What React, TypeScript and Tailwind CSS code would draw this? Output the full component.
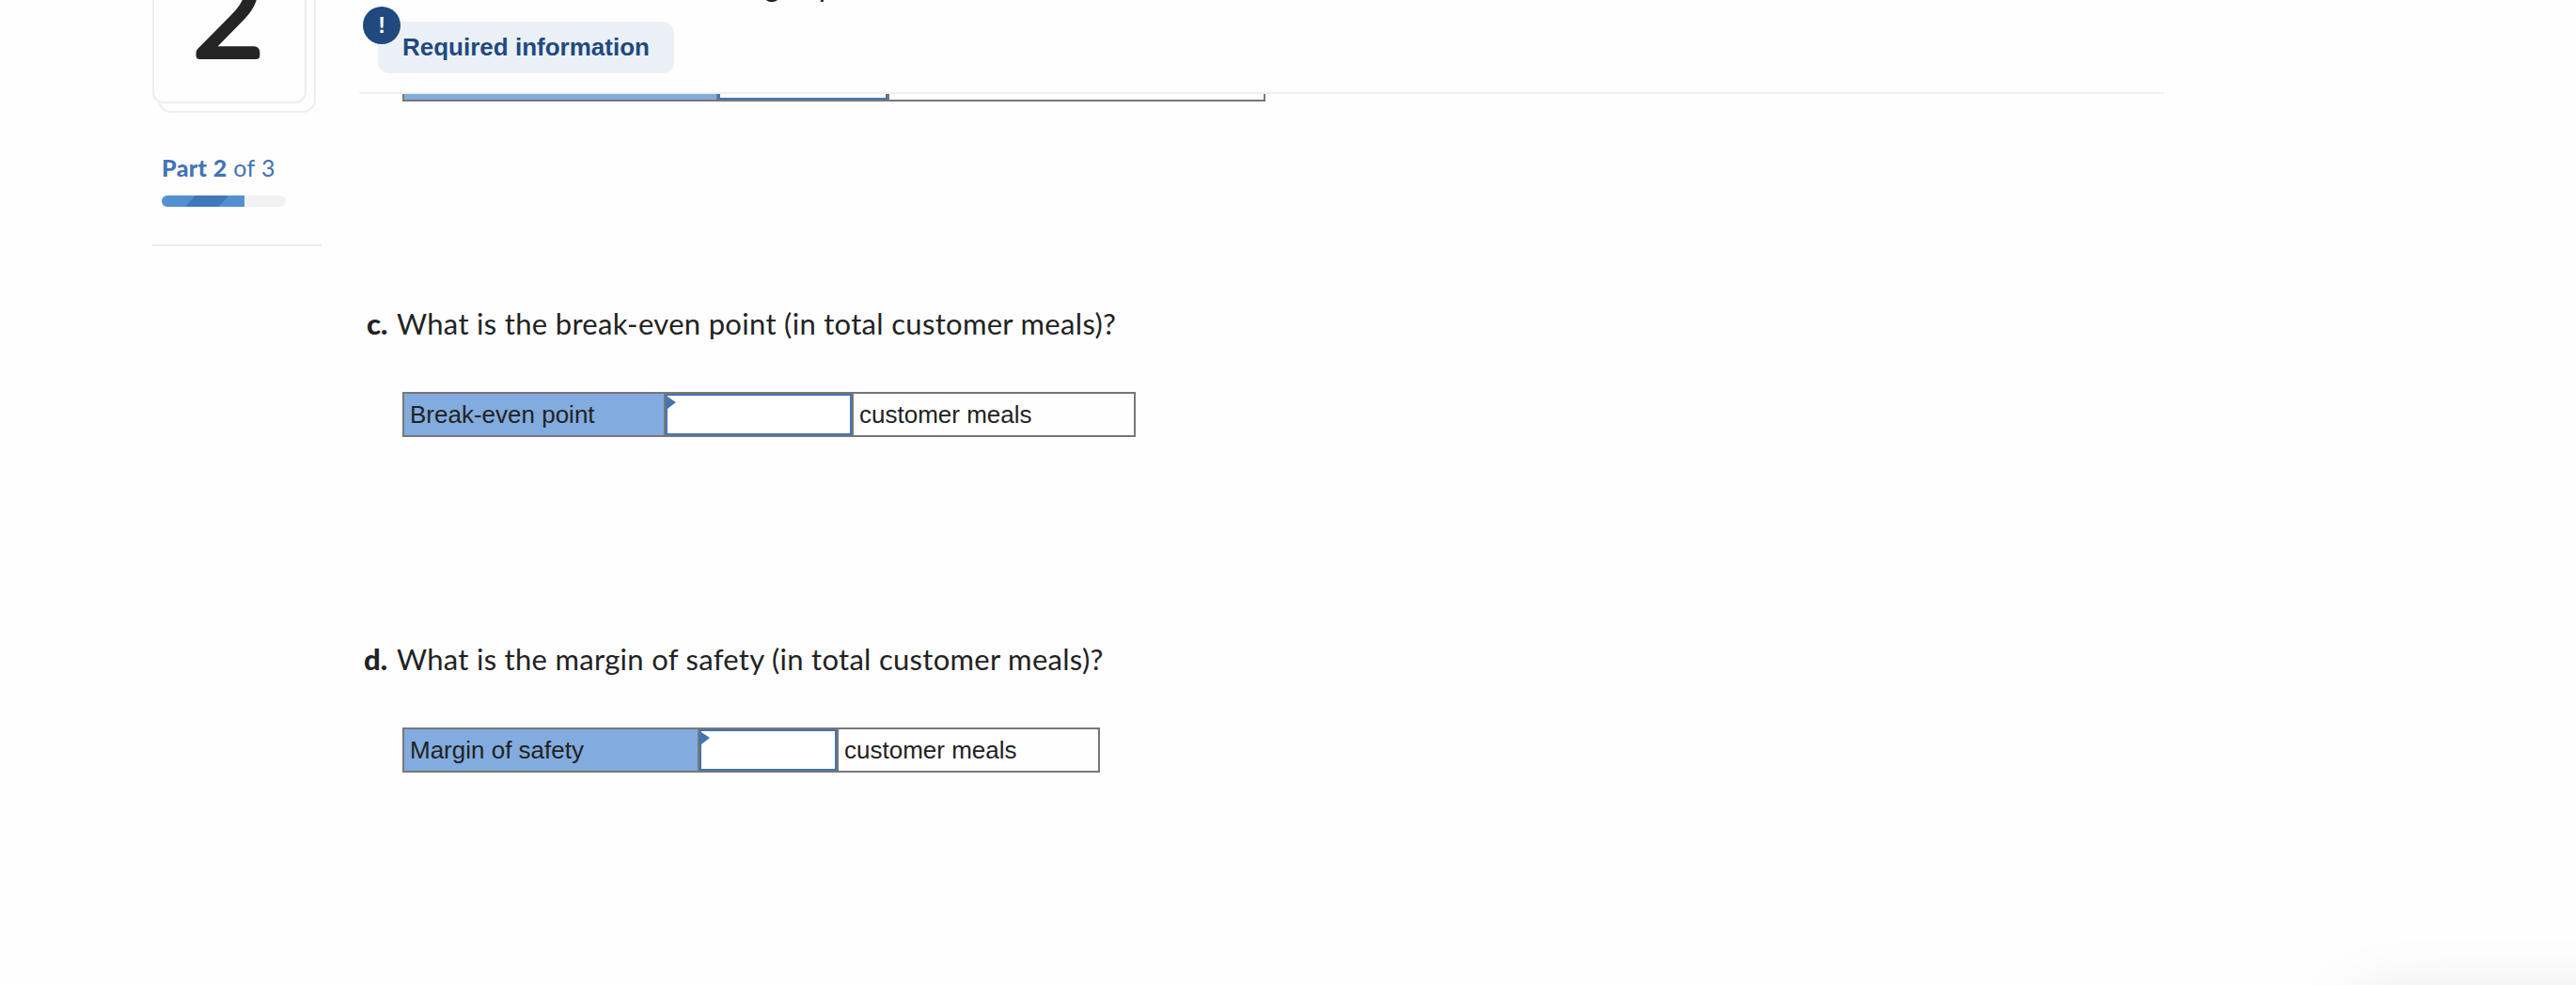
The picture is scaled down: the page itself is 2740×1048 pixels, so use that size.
type RowProps = {
  label: string
  unit: string
  labelWidth: string
  inputWidth: string
  unitWidth: string
}

function AnswerRow({ label, unit, labelWidth, inputWidth, unitWidth }: RowProps) {
  return (
    <div className="ml-[46px] flex h-12 w-fit border-2 border-[#777777] font-['Liberation_Sans',sans-serif] text-[26px] text-[#222222]">
      <div className={`${labelWidth} flex items-center border-r-2 border-[#777777] bg-[#82acdf] pl-[6px]`}>
        {label}
      </div>
      <div className={`${inputWidth} relative border-2 border-[#4374b4] bg-white`}>
        <svg className="absolute left-0 top-0 h-[14px] w-[9px]" viewBox="0 0 9 14">
          <path d="M0 1L9 7L0 14Z" fill="#4374b4" />
        </svg>
      </div>
      <div className={`${unitWidth} flex items-center border-l-2 border-[#777777] pl-[6px]`}>{unit}</div>
    </div>
  )
}

export default function App() {
  return (
    <div className="relative flex h-[1048px] w-[2740px] overflow-hidden bg-[#fefefe] font-['Lato',sans-serif] text-[#222222]">
      {/* Question number and progress */}
      <aside className="ml-[162px] w-[180px] shrink-0">
        <div className="relative h-[120px]">
          <div className="absolute -top-10 left-[6px] h-[160px] w-[168px] rounded-[14px] border-2 border-[#eeeeee]" />
          <div className="absolute -top-10 left-0 h-[150px] w-[164px] rounded-[12px] border-2 border-[#eeeeee] bg-[#fefefe]">
            <svg className="h-full w-full" viewBox="0 0 160 146">
              <text
                x="41"
                y="96.5"
                fontSize="131"
                fontWeight="300"
                fill="#242424"
                stroke="#242424"
                strokeWidth="8"
                strokeLinejoin="round"
              >
                2
              </text>
            </svg>
          </div>
        </div>
        <p className="ml-[10px] mt-[43px] h-[30px] whitespace-nowrap text-[25px] leading-[30px] tracking-[0.35px] text-[#4374b4]">
          <b className="font-black">Part 2</b> of 3
        </p>
        <div className="ml-[10px] mt-[15px] h-3 w-[132px] overflow-hidden rounded-full bg-[#f2f2f2]">
          <svg className="h-3 w-[88px]" viewBox="0 0 88 12">
            <rect width="88" height="12" fill="#5490d0" />
            <path d="M25 12L36 0H70V2L60 12Z" fill="#3e78b8" />
          </svg>
        </div>
        <div className="mt-10 h-[2px] bg-[#eeeeee]" />
      </aside>

      {/* Question body */}
      <main className="ml-10 w-[1920px] shrink-0">
        <header className="relative h-[100px] border-b-2 border-[#f0f0f0]">
          <p className="absolute -top-[34px] left-[393px] text-[31px] leading-[38px] tracking-[0.3px] [word-spacing:5px]">
            target profit
          </p>
          <div className="ml-5 flex pt-[23px]">
            <h2 className="flex h-[55px] w-[315px] items-center rounded-[12px] bg-[#ebf0f7] pl-[26px] font-['Liberation_Sans',sans-serif] text-[26px] font-bold text-[#21497f]">
              Required information
            </h2>
          </div>
          <span className="absolute left-1 top-[7px] flex h-10 w-10 items-center justify-center rounded-full bg-[#21497f] font-['Liberation_Sans',sans-serif] text-[23px] font-bold text-white">
            !
          </span>
        </header>

        {/* Bottom edge of the row that scrolled under the header */}
        <div className="ml-[46px] flex h-2 w-[918px] border-x-2 border-b-2 border-[#777777]">
          <div className="w-[334px] border-r-2 border-[#777777] bg-[#82acdf]" />
          <div className="w-[180px] border-x-2 border-b-2 border-[#4374b4]" />
          <div className="flex-1 border-l-2 border-[#777777]" />
        </div>

        <section className="mt-[216px]">
          <p className="ml-2 h-10 whitespace-nowrap text-[31px] leading-10">
            <b className="inline-block w-8 font-black">c.</b>
            <span className="tracking-[0.31px]">What is the break-even point (in total customer meals)?</span>
          </p>
          <div className="mt-[53px]">
            <AnswerRow
              label="Break-even point"
              unit="customer meals"
              labelWidth="w-[278px]"
              inputWidth="w-[198px]"
              unitWidth="w-[300px]"
            />
          </div>
        </section>

        <section className="mt-[216px]">
          <p className="ml-[5px] h-10 whitespace-nowrap text-[31px] leading-10">
            <b className="inline-block w-[35px] font-black">d.</b>
            <span className="tracking-[0.29px]">What is the margin of safety (in total customer meals)?</span>
          </p>
          <div className="mt-[53px]">
            <AnswerRow
              label="Margin of safety"
              unit="customer meals"
              labelWidth="w-[314px]"
              inputWidth="w-[146px]"
              unitWidth="w-[278px]"
            />
          </div>
        </section>
      </main>

      {/* Shadow of the floating panel below the viewport */}
      <div className="absolute left-[2506px] top-[1072px] h-[200px] w-[400px] rounded-[20px] shadow-[0_0_80px_rgba(0,0,0,0.14)]" />
    </div>
  )
}
